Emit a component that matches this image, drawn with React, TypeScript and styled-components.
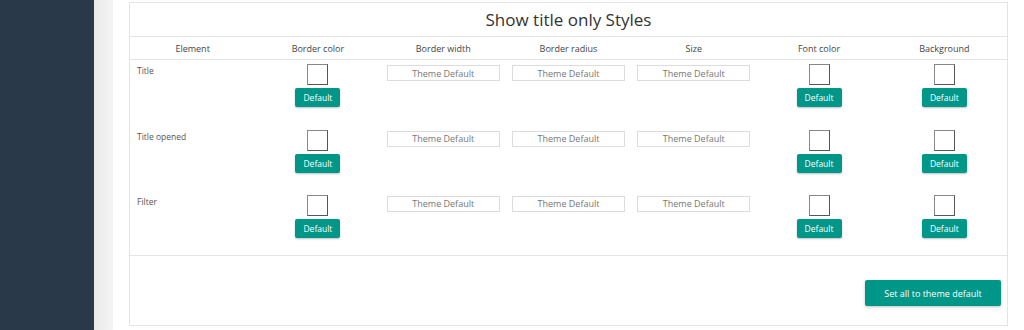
import React from 'react'
import styled, { createGlobalStyle } from 'styled-components'

const GlobalStyle = createGlobalStyle`
  html, body {
    margin: 0;
    padding: 0;
    background: #ffffff;
    font-family: 'Open Sans', 'DejaVu Sans', sans-serif;
  }
`

const Page = styled.div`
  display: flex;
  height: 330px;
  overflow: hidden;
`

const Sidebar = styled.div`
  width: 94px;
  flex-shrink: 0;
  background: #2a3949;
`

const Gutter = styled.div`
  width: 19px;
  flex-shrink: 0;
  background: linear-gradient(to right, #e9e9e9, #f1f1f1 70%, #f4f4f4);
`

const Main = styled.div`
  flex: 1;
  padding: 2px 16px 0 16px;
`

const Panel = styled.div`
  border: 1px solid #e4e4e4;
  height: 324px;
  box-sizing: border-box;
`

const Title = styled.h2`
  margin: 0;
  height: 33px;
  border-bottom: 1px solid #e4e4e4;
  display: flex;
  align-items: center;
  justify-content: center;
  font-size: 17px;
  font-weight: 400;
  color: #333;
`

const Table = styled.table`
  width: 100%;
  table-layout: fixed;
  border-collapse: collapse;
`

const HeadCell = styled.th`
  height: 22px;
  padding: 0;
  font-size: 9px;
  font-weight: 400;
  color: #444;
  text-align: center;
  border-bottom: 1px solid #e4e4e4;
`

const Row = styled.tr<{ $height: number; $last?: boolean }>`
  height: ${(p) => p.$height}px;
  border-bottom: ${(p) => (p.$last ? '1px solid #e4e4e4' : 'none')};
`

const NameCell = styled.td`
  vertical-align: top;
  padding: 5px 7px 0;
  font-size: 8.5px;
  color: #555;
`

const Cell = styled.td`
  vertical-align: top;
  padding: 4px 0 0;
  text-align: center;
`

const ColorStack = styled.div`
  display: flex;
  flex-direction: column;
  align-items: center;
  gap: 3px;
`

const Swatch = styled.div`
  width: 19px;
  height: 19px;
  border: 1px solid #555;
  border-top-color: #888;
  border-left-color: #888;
  background: #fff;
`

const DefaultButton = styled.button`
  width: 45px;
  height: 19px;
  border: none;
  border-radius: 2px;
  background: #009688;
  color: #fff;
  font-family: inherit;
  font-size: 8.5px;
  padding: 0;
  box-shadow: 0 1px 2px rgba(0, 0, 0, 0.25);
`

const ThemeInput = styled.input`
  display: block;
  box-sizing: border-box;
  width: 113px;
  height: 16px;
  margin: 1px auto 0;
  border: 1px solid #dcdcdc;
  text-align: center;
  font-family: inherit;
  font-size: 9px;
  padding: 0;
  outline: none;
  &::placeholder {
    color: #777;
  }
`

const Footer = styled.div`
  display: flex;
  justify-content: flex-end;
  padding: 24px 6px 0 0;
`

const ResetButton = styled.button`
  width: 136px;
  height: 26px;
  border: none;
  border-radius: 2px;
  background: #009688;
  color: #fff;
  font-family: inherit;
  font-size: 9px;
  box-shadow: 0 1px 3px rgba(0, 0, 0, 0.25);
`

const columns = ['Element', 'Border color', 'Border width', 'Border radius', 'Size', 'Font color', 'Background']
const rows = [
  { name: 'Title', height: 66 },
  { name: 'Title opened', height: 65 },
  { name: 'Filter', height: 65 },
]

function ColorCell() {
  return (
    <Cell>
      <ColorStack>
        <Swatch />
        <DefaultButton>Default</DefaultButton>
      </ColorStack>
    </Cell>
  )
}

function InputCell() {
  return (
    <Cell>
      <ThemeInput placeholder="Theme Default" />
    </Cell>
  )
}

export default function App() {
  return (
    <>
      <GlobalStyle />
      <Page>
        <Sidebar />
        <Gutter />
        <Main>
          <Panel>
            <Title>Show title only Styles</Title>
            <Table>
              <thead>
                <tr>
                  {columns.map((c) => (
                    <HeadCell key={c}>{c}</HeadCell>
                  ))}
                </tr>
              </thead>
              <tbody>
                {rows.map((r, i) => (
                  <Row key={r.name} $height={r.height} $last={i === rows.length - 1}>
                    <NameCell>{r.name}</NameCell>
                    <ColorCell />
                    <InputCell />
                    <InputCell />
                    <InputCell />
                    <ColorCell />
                    <ColorCell />
                  </Row>
                ))}
              </tbody>
            </Table>
            <Footer>
              <ResetButton>Set all to theme default</ResetButton>
            </Footer>
          </Panel>
        </Main>
      </Page>
    </>
  )
}
